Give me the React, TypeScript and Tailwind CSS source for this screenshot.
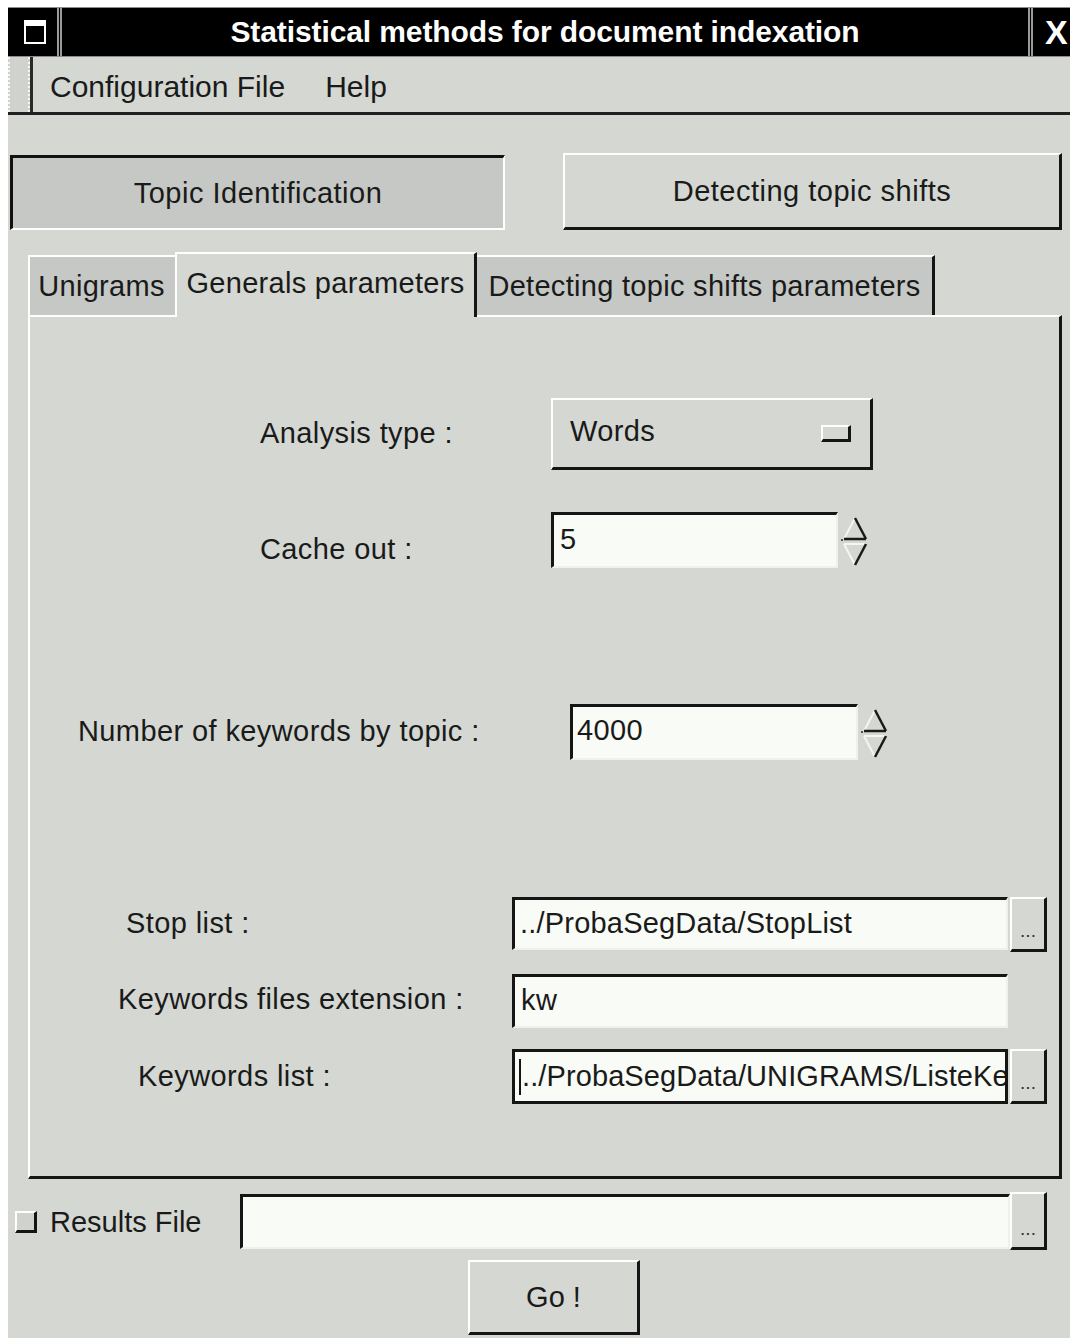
import React from "react";

const raised =
  "border-t-2 border-l-2 border-t-white border-l-white border-b-[3px] border-r-[3px] border-b-[#151515] border-r-[#151515]";
const sunken =
  "border-t-[3px] border-l-[3px] border-t-[#151515] border-l-[#151515] border-b-2 border-r-2 border-b-[#eef1ec] border-r-[#eef1ec]";

function Spinner() {
  return (
    <svg width="30" height="58" viewBox="0 0 30 58" className="ml-[2px]">
      <line x1="15" y1="6" x2="4" y2="27" stroke="#f4f6f2" strokeWidth="2" />
      <line x1="15" y1="6" x2="26" y2="27" stroke="#1a1a1a" strokeWidth="2.5" />
      <line x1="4" y1="27" x2="26" y2="27" stroke="#1a1a1a" strokeWidth="2.5" />
      <line x1="4" y1="32" x2="26" y2="32" stroke="#f4f6f2" strokeWidth="2" />
      <line x1="4" y1="32" x2="15" y2="53" stroke="#f4f6f2" strokeWidth="2" />
      <line x1="26" y1="32" x2="15" y2="53" stroke="#1a1a1a" strokeWidth="2.5" />
      <rect x="1" y="27" width="2" height="2" fill="#555" />
    </svg>
  );
}

function DotsButton({ h }: { h: string }) {
  return (
    <div
      className={`w-[37px] ${h} ${raised} bg-[#d4d7d2] flex items-end justify-center pb-[9px] text-[19px] leading-none text-[#333] tracking-normal`}
    >
      ...
    </div>
  );
}

export default function App() {
  return (
    <div className="w-[1070px] h-[1338px] bg-white overflow-hidden font-['Liberation_Sans',Arial,sans-serif] text-[#1a1a1a]">
      <div className="pl-[8px] pt-[7px]">
        <div className="w-[1080px] h-[1331px] bg-[#d4d7d2] flex flex-col">
          {/* Title bar */}
          <div className="h-[50px] bg-black flex border-t border-b border-[#8c8c8c]">
            <div className="w-[54px] flex items-center justify-center border-r-[5px] border-double border-r-[#9a9a9a]">
              <div className="w-[22px] h-[24px] border-2 border-t-[6px] border-white bg-black ml-[4px]" />
            </div>
            <div className="flex-1 flex items-center justify-center text-white font-bold text-[30px] leading-none tracking-[-0.1px]">
              Statistical methods for document indexation
            </div>
            <div className="w-[60px] flex items-center pl-[12px] border-l-[5px] border-double border-l-[#9a9a9a] text-white font-bold text-[34px] leading-none">
              X
            </div>
          </div>

          {/* Menu bar */}
          <div className="h-[58px] flex border-b-[3px] border-b-[#202020]">
            <div className="w-[22px] bg-[#cfd2cd] border-l-2 border-r-2 border-dotted border-[#f5f7f3]" />
            <div className="w-[3px] bg-[#2a2a2a]" />
            <div className="flex items-center pl-[17px] gap-[40px] text-[30px] leading-none pt-[5px]">
              <span>Configuration File</span>
              <span>Help</span>
            </div>
          </div>

          {/* Top toggle buttons */}
          <div className="flex mt-[38px] h-[77px] text-[29px] leading-none tracking-[0.5px]">
            <div className="ml-[2px] w-[495px] h-[75px] mt-[2px] bg-[#c5c8c4] border-t-[3px] border-l-[3px] border-t-[#111] border-l-[#111] border-b-2 border-r-2 border-b-white border-r-white flex items-center justify-center">
              Topic Identification
            </div>
            <div
              className={`ml-[58px] w-[499px] h-[77px] ${raised} bg-[#d4d7d2] flex items-center justify-center`}
            >
              Detecting topic shifts
            </div>
          </div>

          {/* Tabs */}
          <div className="ml-[20px] mt-[20px] flex items-end h-[65px] text-[29px] leading-none tracking-[0.3px]">
            <div className="w-[147px] h-[60px] bg-[#c5c8c4] border-t-2 border-l-2 border-white flex items-center justify-center pr-[2px]">
              Unigrams
            </div>
            <div className="w-[302px] h-[65px] bg-[#d4d7d2] border-t-2 border-l-2 border-white border-r-[3px] border-r-[#151515] flex items-center justify-center pb-[4px] relative z-10 -mb-[2px]">
              Generals parameters
            </div>
            <div className="w-[458px] h-[60px] bg-[#c5c8c4] border-t-2 border-white border-r-[3px] border-r-[#151515] flex items-center justify-center">
              Detecting topic shifts parameters
            </div>
          </div>

          {/* Panel */}
          <div className="ml-[20px] w-[1034px] h-[864px] border-t-2 border-l-2 border-white border-b-[3px] border-r-[3px] border-b-[#151515] border-r-[#151515] flex flex-col text-[29px] leading-none tracking-[0.4px]">
            {/* Analysis type */}
            <div className="flex mt-[81px] h-[72px]">
              <div className="w-[521px] pl-[230px] flex items-center pb-[2px] whitespace-pre">Analysis type :</div>
              <div className={`w-[322px] h-[72px] ${raised} bg-[#d4d7d2] flex items-center justify-between pl-[17px] pr-[19px] pb-[4px]`}>
                <span>Words</span>
                <div className="w-[30px] h-[17px] mt-[4px] border-t-2 border-l-2 border-white border-b-[3px] border-r-[3px] border-b-[#151515] border-r-[#151515] bg-[#d4d7d2]" />
              </div>
            </div>

            {/* Cache out */}
            <div className="flex mt-[42px] h-[58px]">
              <div className="w-[521px] pl-[230px] flex items-center pt-[16px]">Cache out :</div>
              <div className={`w-[287px] h-[56px] ${sunken} bg-[#f8fbf6] flex items-center pl-[6px] pb-[2px]`}>5</div>
              <Spinner />
            </div>

            {/* Number of keywords */}
            <div className="flex mt-[134px] h-[58px]">
              <div className="w-[540px] pl-[48px] flex items-center pb-[4px]">Number of keywords by topic :</div>
              <div className={`w-[288px] h-[56px] ${sunken} bg-[#f8fbf6] flex items-center pl-[4px] pb-[4px]`}>4000</div>
              <Spinner />
            </div>

            {/* Stop list */}
            <div className="flex mt-[135px] h-[55px]">
              <div className="w-[482px] pl-[96px] flex items-center pb-[2px]">Stop list :</div>
              <div className={`w-[496px] h-[53px] ${sunken} bg-[#f8fbf6] flex items-center pl-[5px] pb-[2px] tracking-[0.2px]`}>
                ../ProbaSegData/StopList
              </div>
              <div className="ml-[2px]">
                <DotsButton h="h-[55px]" />
              </div>
            </div>

            {/* Keywords files extension */}
            <div className="flex mt-[22px] h-[54px]">
              <div className="w-[482px] pl-[88px] flex items-center pb-[4px]">Keywords files extension :</div>
              <div className={`w-[496px] h-[54px] ${sunken} bg-[#f8fbf6] flex items-center pl-[6px] pb-[2px]`}>kw</div>
            </div>

            {/* Keywords list */}
            <div className="flex mt-[21px] h-[55px]">
              <div className="w-[482px] pl-[108px] flex items-center">Keywords list :</div>
              <div className="w-[496px] h-[55px] border-[3px] border-[#151515] bg-[#f8fbf6] flex items-center pl-[4px] overflow-hidden whitespace-nowrap tracking-[0.1px]">
                <span className="inline-block w-[2px] h-[36px] bg-[#151515] mr-[1px] shrink-0" />
                <span>../ProbaSegData/UNIGRAMS/ListeKe</span>
              </div>
              <div className="ml-[2px]">
                <DotsButton h="h-[55px]" />
              </div>
            </div>
          </div>

          {/* Results file */}
          <div className="flex mt-[13px] h-[58px] items-start">
            <div className="w-[232px] h-[58px] flex items-center pl-[7px] pt-[2px]">
              <div className="w-[22px] h-[22px] border-t-2 border-l-2 border-white border-b-[3px] border-r-[3px] border-b-[#151515] border-r-[#151515] bg-[#cfd2cd]" />
              <span className="ml-[13px] text-[29px] leading-none">Results File</span>
            </div>
            <div className={`mt-[2px] w-[770px] h-[55px] ${sunken} bg-[#f8fbf6]`} />
            <DotsButton h="h-[58px]" />
          </div>

          {/* Go */}
          <div className="mt-[10px] ml-[460px]">
            <div className={`w-[172px] h-[75px] ${raised} bg-[#d4d7d2] flex items-center justify-center text-[29px] leading-none`}>
              Go !
            </div>
          </div>
        </div>
      </div>
    </div>
  );
}
